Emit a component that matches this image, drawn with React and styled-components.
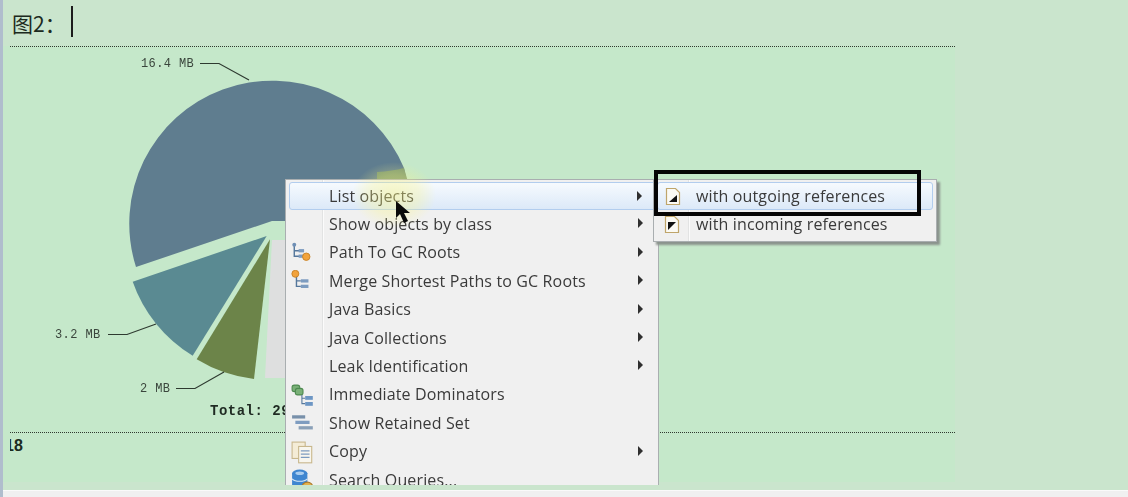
import React from "react";
import styled, { createGlobalStyle } from "styled-components";

const GlobalStyle = createGlobalStyle`
  html, body {
    margin: 0;
    padding: 0;
    height: 497px;
    overflow: hidden;
    background: #cbe5cd;
  }
`;

const Page = styled.div`
  position: relative;
  display: flex;
  width: 1128px;
  height: 497px;
  overflow: hidden;
  background: #cae5cd;
`;

const LeftStrip = styled.div`
  width: 3px;
  flex: none;
  background: #b0bdcd;
`;

const Main = styled.div`
  flex: 1;
  display: flex;
  flex-direction: column;
`;

const Heading = styled.div`
  height: 46px;
  display: flex;
  padding-left: 9px;
  box-sizing: border-box;
`;

const HeadingText = styled.span`
  font-family: "Noto Sans CJK SC", "Liberation Sans", sans-serif;
  font-size: 21px;
  line-height: 21px;
  margin-top: 13px;
  width: 59px;
  color: #1c2a20;
`;

const Caret = styled.span`
  width: 2px;
  height: 31px;
  margin-top: 6px;
  background: #1c1c1c;
`;

const Panel = styled.div`
  width: 952px;
  height: 436px;
  background: #c5e8ca;
  display: flex;
  flex-direction: column;
`;

const Rule = styled.div`
  margin-left: 7px;
  height: 0;
  border-top: 1px dotted #30392f;
`;

const ChartSvg = styled.svg`
  display: block;
  flex: none;
  filter: blur(0.3px);
`;

const PieLabel = styled.text`
  font-family: "Liberation Mono", monospace;
  font-size: 12px;
  letter-spacing: 0.4px;
  fill: #3a453c;
`;

const TotalLabel = styled.text`
  font-family: "Liberation Mono", monospace;
  font-size: 14px;
  font-weight: 700;
  letter-spacing: 0.5px;
  fill: #1f2a22;
`;

const FootNumber = styled.div`
  margin-left: 7px;
  margin-top: 4px;
  width: 20px;
  overflow: hidden;
  font-family: "Liberation Sans", sans-serif;
  font-size: 16px;
  font-weight: 700;
  line-height: 18px;
  text-indent: -5px;
  color: #1c2a20;
`;

const BottomBar = styled.div`
  margin-top: auto;
  height: 7px;
  flex: none;
  background: #f0f0f0;
  border-top: 1px solid #fafafa;
  box-sizing: border-box;
`;

const Menu = styled.div`
  position: absolute;
  left: 285px;
  top: 179px;
  width: 374px;
  height: 306px;
  box-sizing: border-box;
  overflow: hidden;
  padding: 2px 2px 0 3px;
  background: #f0f0f0;
  border: 1px solid #a9aeb0;
  border-bottom: 0;
  filter: blur(0.35px);
`;

const SubMenu = styled(Menu)`
  left: 653px;
  width: 284px;
  height: 63px;
  overflow: visible;
  padding: 2px 3px 0 3px;
  border-bottom: 1px solid #a9aeb0;
  box-shadow: 3px 3px 2px #8b938d;
`;

const Gutter = styled.div`
  position: absolute;
  left: ${(p) => p.$left}px;
  top: 0;
  bottom: 0;
  width: 1px;
  background: #e2e3e3;
  box-shadow: 1px 0 0 #fbfbfb;
`;

const Row = styled.div`
  position: relative;
  height: 28.4px;
  box-sizing: border-box;
  display: flex;
  align-items: center;
  padding-left: ${(p) => p.$indent - (p.$active ? 1 : 0)}px;
  padding-bottom: 1px;
  font-family: "Open Sans", "Noto Sans", sans-serif;
  font-size: 16px;
  letter-spacing: 0.14px;
  color: #3a3a3a;
  white-space: nowrap;
  ${(p) =>
    p.$active &&
    `
    border: 1px solid #b2cdee;
    border-radius: 3px;
    background: linear-gradient(to bottom, #f6fafe, #dce9f8);
  `}
`;

const RowIcon = styled.svg`
  position: absolute;
  left: ${(p) => p.$left}px;
  top: ${(p) => p.$top}px;
`;

const Arrow = styled.span`
  position: absolute;
  right: ${(p) => p.$right}px;
  top: 8px;
  width: 0;
  height: 0;
  border-left: 5px solid #2f2f2f;
  border-top: 5px solid transparent;
  border-bottom: 5px solid transparent;
`;

const Glow = styled.div`
  position: absolute;
  left: 352px;
  top: 162px;
  width: 84px;
  height: 66px;
  border-radius: 50%;
  background: radial-gradient(closest-side, rgba(250, 245, 130, 0.45), rgba(250, 245, 130, 0.28) 60%, rgba(250, 245, 130, 0));
  pointer-events: none;
`;

const Callout = styled.div`
  position: absolute;
  left: 654px;
  top: 170px;
  width: 267px;
  height: 46px;
  box-sizing: border-box;
  border: 4px solid #050505;
  pointer-events: none;
`;

const Pointer = styled.svg`
  position: absolute;
  left: 395px;
  top: 200px;
`;

const TreeIcon = () => (
  <>
    <path d="M3 3v10h6M3 8h6" fill="none" stroke="#55779c" strokeWidth="1.3" />
    <circle cx="3" cy="2.5" r="1.8" fill="#6f8fb5" />
    <rect x="7" y="6.5" width="5" height="3" fill="#7d9cc0" />
    <rect x="7" y="11.5" width="5" height="3" fill="#7d9cc0" />
    <circle cx="14" cy="13.5" r="3.4" fill="#f2a33c" stroke="#c77f22" strokeWidth="0.8" />
  </>
);

const MergeIcon = () => (
  <>
    <path d="M5 5v10h4M5 10h4" fill="none" stroke="#55779c" strokeWidth="1.3" />
    <circle cx="4" cy="3.5" r="3.2" fill="#f2a33c" stroke="#c77f22" strokeWidth="0.8" />
    <rect x="9" y="8.5" width="7" height="3" fill="#7d9cc0" />
    <rect x="9" y="13.5" width="7" height="3" fill="#7d9cc0" />
  </>
);

const DominatorIcon = () => (
  <>
    <rect x="1" y="1" width="7" height="6" rx="2" fill="#79b077" stroke="#4e8a50" />
    <rect x="4" y="4" width="7" height="6" rx="2" fill="#79b077" stroke="#4e8a50" />
    <path d="M10 10v8h3M10 13h3" fill="none" stroke="#55779c" />
    <rect x="13" y="11" width="7" height="3.5" fill="#6d96c4" />
    <rect x="13" y="16.5" width="7" height="3.5" fill="#6d96c4" />
  </>
);

const RetainedIcon = () => (
  <>
    <rect x="1" y="3" width="12" height="3" fill="#7890aa" />
    <rect x="4" y="8" width="13" height="3" fill="#7e9cc0" />
    <rect x="7" y="13" width="13" height="3" fill="#8aa0b8" />
  </>
);

const CopyIcon = () => (
  <>
    <rect x="1" y="1" width="12" height="15" fill="#f4ecd6" stroke="#c8b78c" />
    <rect x="7" y="5" width="12" height="15" fill="#f8f6ee" stroke="#c8b78c" />
    <path d="M9 9h8M9 12h8M9 15h8" stroke="#7d9cc0" strokeWidth="1.2" />
  </>
);

const QueryIcon = () => (
  <>
    <ellipse cx="8" cy="4" rx="7" ry="3.5" fill="#3f86d0" />
    <rect x="1" y="4" width="14" height="12" fill="#3f86d0" />
    <path d="M1 9c3 3 11 3 14 0" fill="none" stroke="#d8e8f6" />
    <ellipse cx="8" cy="4" rx="4" ry="1.6" fill="#a9cdf0" />
    <circle cx="15" cy="17" r="5" fill="#e5b04a" stroke="#a9782a" />
  </>
);

const menuItems = [
  { label: "List objects", arrow: true, active: true },
  { label: "Show objects by class", arrow: true },
  { label: "Path To GC Roots", arrow: true, icon: <TreeIcon /> },
  { label: "Merge Shortest Paths to GC Roots", arrow: true, icon: <MergeIcon /> },
  { label: "Java Basics", arrow: true },
  { label: "Java Collections", arrow: true },
  { label: "Leak Identification", arrow: true },
  { label: "Immediate Dominators", icon: <DominatorIcon /> },
  { label: "Show Retained Set", icon: <RetainedIcon /> },
  { label: "Copy", arrow: true, icon: <CopyIcon /> },
  { label: "Search Queries...", icon: <QueryIcon /> },
];

const RefIcon = ({ outgoing }) => (
  <RowIcon $left={7} $top={outgoing ? 4 : 5} width="16" height="19" viewBox="0 0 16 19">
    <path d="M1.5 1.5h9l4 4v12h-13z" fill="#fbfaf4" stroke="#bfa56a" strokeWidth="1.2" />
    {outgoing ? (
      <path d="M4 15L12 8v7z" fill="#111" />
    ) : (
      <path d="M4 7h8l-8 8z" fill="#111" />
    )}
  </RowIcon>
);

const Chart = () => (
  <ChartSvg width="952" height="385" viewBox="0 47 952 385" xmlns="http://www.w3.org/2000/svg">
    <g transform="translate(-3 47)">
      <path d="M272 174 L136 220 A143 143 0 0 1 404 121 L407 135 L285 174 Z" fill="#5f7d8f" />
      <path d="M377 125 Q392 124 404 121 L408 135 L377 135 Z" fill="#7f9b72" />
      <path d="M266.7 189 L132.7 234.7 A141 141 0 0 0 192.7 308.7 Z" fill="#5a8a92" />
      <path d="M270 192.3 L196.7 312.3 A141 141 0 0 0 254 332 Z" fill="#6c8449" />
      <path d="M272 193 L265 331 L290 331 L290 193 Z" fill="#dedfdf" />
      <g fill="none" stroke="#2e3a30" strokeWidth="1.2">
        <path d="M200 16.5H219L249 33" />
        <path d="M108 287.5H127L156 277" />
        <path d="M176 341.5H195L224 325" />
      </g>
      <PieLabel x="141" y="20">16.4 MB</PieLabel>
      <PieLabel x="55" y="291">3.2 MB</PieLabel>
      <PieLabel x="140" y="345">2 MB</PieLabel>
      <TotalLabel x="210" y="368">Total: 29</TotalLabel>
    </g>
  </ChartSvg>
);

export default function App() {
  return (
    <Page>
      <GlobalStyle />
      <LeftStrip />
      <Main>
        <Heading>
          <HeadingText>图2：</HeadingText>
          <Caret />
        </Heading>
        <Panel>
          <Rule />
          <Chart />
          <Rule />
          <FootNumber>18</FootNumber>
        </Panel>
        <BottomBar />
      </Main>

      <Menu>
        <Gutter $left={36} />
        {menuItems.map((item) => (
          <Row key={item.label} $indent={40} $active={item.active}>
            {item.icon && (
              <RowIcon $left={2} $top={3} width="24" height="24" viewBox="0 0 22 22">
                {item.icon}
              </RowIcon>
            )}
            {item.label}
            {item.arrow && <Arrow $right={13} />}
          </Row>
        ))}
      </Menu>

      <SubMenu>
        <Gutter $left={34} />
        <Row $indent={39} $active>
          <RefIcon outgoing />
          with outgoing references
        </Row>
        <Row $indent={39}>
          <RefIcon />
          with incoming references
        </Row>
      </SubMenu>

      <Glow />
      <Callout />
      <Pointer width="16" height="25" viewBox="0 0 16 25">
        <path d="M1 1v17l4-4 4 9 4-2-4-8h6z" fill="#0a0a0a" />
      </Pointer>
    </Page>
  );
}
